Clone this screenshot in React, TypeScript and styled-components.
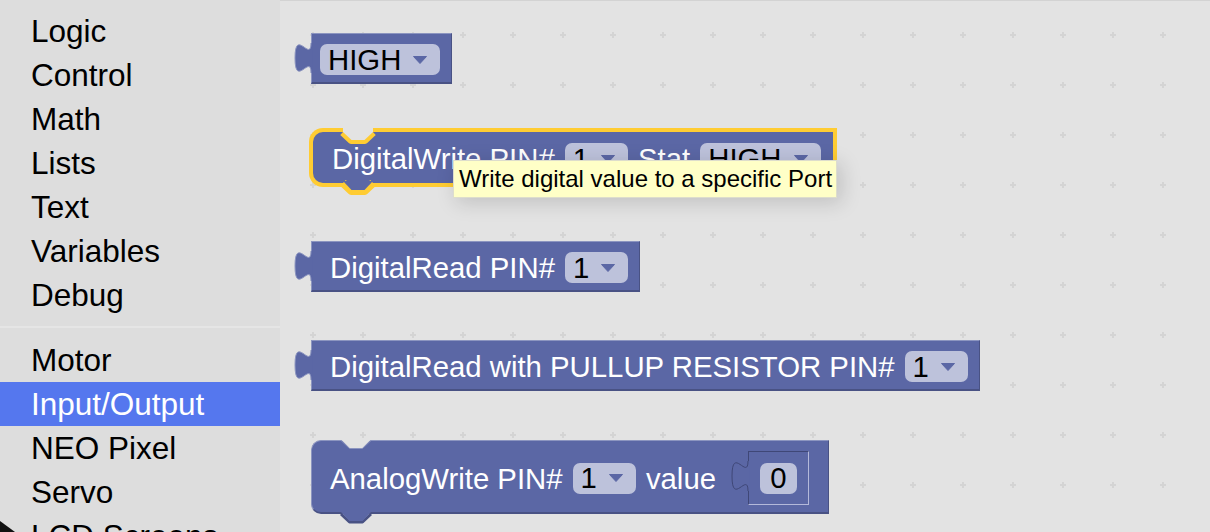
import React from 'react';
import styled, { createGlobalStyle } from 'styled-components';

const BLOCK = '#5b67a5';
const BLOCK_LIGHT = '#8c95c0';
const BLOCK_DARK = '#495284';
const FIELD = '#bdc2db';
const CANVAS = '#e3e3e3';
const SELECT = '#fc3';

const GlobalStyle = createGlobalStyle`
  html, body {
    margin: 0;
    padding: 0;
    overflow: hidden;
  }
  body {
    font-family: "Liberation Sans", Arial, sans-serif;
  }
`;

const Page = styled.div`
  position: relative;
  display: flex;
  width: 1210px;
  height: 532px;
  overflow: hidden;
`;

const Toolbox = styled.nav`
  width: 280px;
  flex-shrink: 0;
  padding-top: 9px;
  box-sizing: border-box;
  background: #ddd;
`;

const Category = styled.div<{ $selected?: boolean }>`
  height: 44px;
  line-height: 44px;
  padding-left: 31px;
  font-size: 31.5px;
  white-space: nowrap;
  color: ${(p) => (p.$selected ? '#fff' : '#000')};
  background: ${(p) => (p.$selected ? '#57e' : 'transparent')};
`;

const Separator = styled.div`
  height: 0;
  margin: 9px 0 10px;
  border-bottom: 2px solid #e5e5e5;
`;

const Workspace = styled.main`
  position: relative;
  flex: 1;
  background: ${CANVAS};
  box-shadow: inset 0 1px 0 #d3d3d3;
`;

const Grid = styled.svg`
  position: absolute;
  inset: 0;
  width: 100%;
  height: 100%;
`;

const Block = styled.div<{ $x: number; $y: number; $statement?: boolean; $selected?: boolean }>`
  position: absolute;
  left: ${(p) => p.$x}px;
  top: ${(p) => p.$y}px;
  display: flex;
  align-items: center;
  gap: 10px;
  padding: 10px 11px 7px 8px;
  background: ${BLOCK};
  border-style: solid;
  border-width: 1px 1px 2px 1px;
  border-color: ${(p) =>
    p.$selected ? 'transparent' : `${BLOCK_LIGHT} ${BLOCK_DARK} ${BLOCK_DARK} ${BLOCK_LIGHT}`};
  border-radius: ${(p) => (p.$statement ? '10px 0 0 10px' : '0')};
  box-shadow: ${(p) => (p.$selected ? `0 0 0 4px ${SELECT}` : 'none')};
`;

const Label = styled.span`
  color: #fff;
  font-size: 29.33px;
  line-height: 31px;
  white-space: nowrap;

  &:first-of-type {
    margin-left: 10px;
  }
`;

const Dropdown = styled.div`
  display: flex;
  align-items: center;
  gap: 12px;
  height: 31px;
  padding: 0 13px 0 8px;
  border-radius: 7px;
  background: ${FIELD};
  color: #000;
  font-size: 29.33px;
  white-space: nowrap;
`;

const NumberField = styled.div`
  display: flex;
  align-items: center;
  height: 31px;
  padding: 0 10px;
  border-radius: 7px;
  background: ${FIELD};
  color: #000;
  font-size: 29.33px;
`;

const Socket = styled.div`
  position: relative;
  display: flex;
  align-items: center;
  justify-content: center;
  width: 61px;
  height: 54px;
  box-sizing: border-box;
  margin-left: 22px;
  margin-right: 8px;
  border: 1px solid;
  border-color: #3f4777 #b4b9da #b4b9da #3f4777;
`;

const Deco = styled.svg<{ $bottom?: boolean }>`
  position: absolute;
  left: -1px;
  ${(p) => (p.$bottom ? 'bottom: -2px;' : 'top: -1px;')}
  overflow: visible;
  pointer-events: none;
`;

const Tooltip = styled.div`
  position: absolute;
  left: 173px;
  top: 160px;
  padding: 4px 4px 4px 5px;
  border: 1px solid #ddc;
  background: #ffffc7;
  box-shadow: 4px 4px 20px 1px rgba(0, 0, 0, 0.15);
  color: #000;
  font-size: 24px;
  line-height: 28px;
  white-space: nowrap;
`;

const Cursor = styled.svg`
  position: absolute;
  left: 0;
  bottom: 0;
`;

const TAB = 'M0,10 C0,30 -16,-6 -16,25 S0,20 0,40';

const OutputTab = () => (
  <Deco width="1" height="1">
    <path d={`${TAB} H1.5 V10 Z`} fill={BLOCK} />
    <path d={TAB} fill="none" stroke={BLOCK_LIGHT} strokeWidth="1" />
  </Deco>
);

const TopNotch = ({ selected }: { selected?: boolean }) => (
  <Deco width="1" height="1">
    {selected && (
      <path d="M30,0 L38.5,8 H51.5 L60,0" fill="none" stroke={SELECT} strokeWidth="8" strokeLinejoin="round" />
    )}
    <path d={selected ? 'M30,-5 H60 V0 L51.5,8 H38.5 L30,0 Z' : 'M30,-0.5 H60 L51.5,8 H38.5 Z'} fill={CANVAS} />
    {!selected && <path d="M30,0.5 L38.5,8.5 H51.5 L60,0.5" fill="none" stroke={BLOCK_LIGHT} strokeWidth="1" />}
  </Deco>
);

const BottomTab = ({ selected }: { selected?: boolean }) => (
  <Deco $bottom width="1" height="10">
    <path
      d="M30,10 L38.5,18 H51.5 L60,10"
      fill="none"
      stroke={selected ? SELECT : BLOCK_DARK}
      strokeWidth={selected ? 8 : 3}
      strokeLinejoin="round"
    />
    <path d="M30,8 H60 L51.5,17 H38.5 Z" fill={BLOCK} />
  </Deco>
);

const Arrow = () => (
  <svg width="14" height="8" viewBox="0 0 14 8">
    <path d="M0.5,0.5 H13.5 L7,7.5 Z" fill={BLOCK} stroke={BLOCK} strokeLinejoin="round" />
  </svg>
);

const Select = ({ value }: { value: string }) => (
  <Dropdown>
    {value}
    <Arrow />
  </Dropdown>
);

const categories = ['Logic', 'Control', 'Math', 'Lists', 'Text', 'Variables', 'Debug'];
const hardware = ['Motor', 'Input/Output', 'NEO Pixel', 'Servo', 'LCD Screens'];

export default function App() {
  return (
    <Page>
      <GlobalStyle />
      <Toolbox>
        {categories.map((name) => (
          <Category key={name}>{name}</Category>
        ))}
        <Separator />
        {hardware.map((name) => (
          <Category key={name} $selected={name === 'Input/Output'}>
            {name}
          </Category>
        ))}
      </Toolbox>
      <Workspace>
        <Grid>
          <defs>
            <pattern id="grid" x="8" y="10" width="50" height="50" patternUnits="userSpaceOnUse">
              <path d="M22,25 H28 M25,22 V28" stroke="#d4d4d4" strokeWidth="2" />
            </pattern>
          </defs>
          <rect width="100%" height="100%" fill="url(#grid)" />
        </Grid>

        <Block $x={31} $y={33}>
          <OutputTab />
          <Select value="HIGH" />
        </Block>

        <Block $x={33} $y={132} $statement $selected>
          <TopNotch selected />
          <Label>DigitalWrite PIN#</Label>
          <Select value="1" />
          <Label>Stat</Label>
          <Select value="HIGH" />
          <BottomTab selected />
        </Block>

        <Block $x={31} $y={241}>
          <OutputTab />
          <Label>DigitalRead PIN#</Label>
          <Select value="1" />
        </Block>

        <Block $x={31} $y={340}>
          <OutputTab />
          <Label>DigitalRead with PULLUP RESISTOR PIN#</Label>
          <Select value="1" />
        </Block>

        <Block $x={31} $y={440} $statement>
          <TopNotch />
          <Label>AnalogWrite PIN#</Label>
          <Select value="1" />
          <Label>value</Label>
          <Socket>
            <Deco width="1" height="1">
              <path d={`${TAB} H1.5 V10 Z`} fill={BLOCK} />
              <path d={TAB} fill="none" stroke="#3f4777" strokeWidth="1" />
            </Deco>
            <NumberField>0</NumberField>
          </Socket>
          <BottomTab />
        </Block>

        <Tooltip>Write digital value to a specific Port</Tooltip>
      </Workspace>
      <Cursor width="15" height="11" viewBox="0 0 15 11">
        <path d="M0,0 L15,11 H0 Z" fill="#111" />
      </Cursor>
    </Page>
  );
}
